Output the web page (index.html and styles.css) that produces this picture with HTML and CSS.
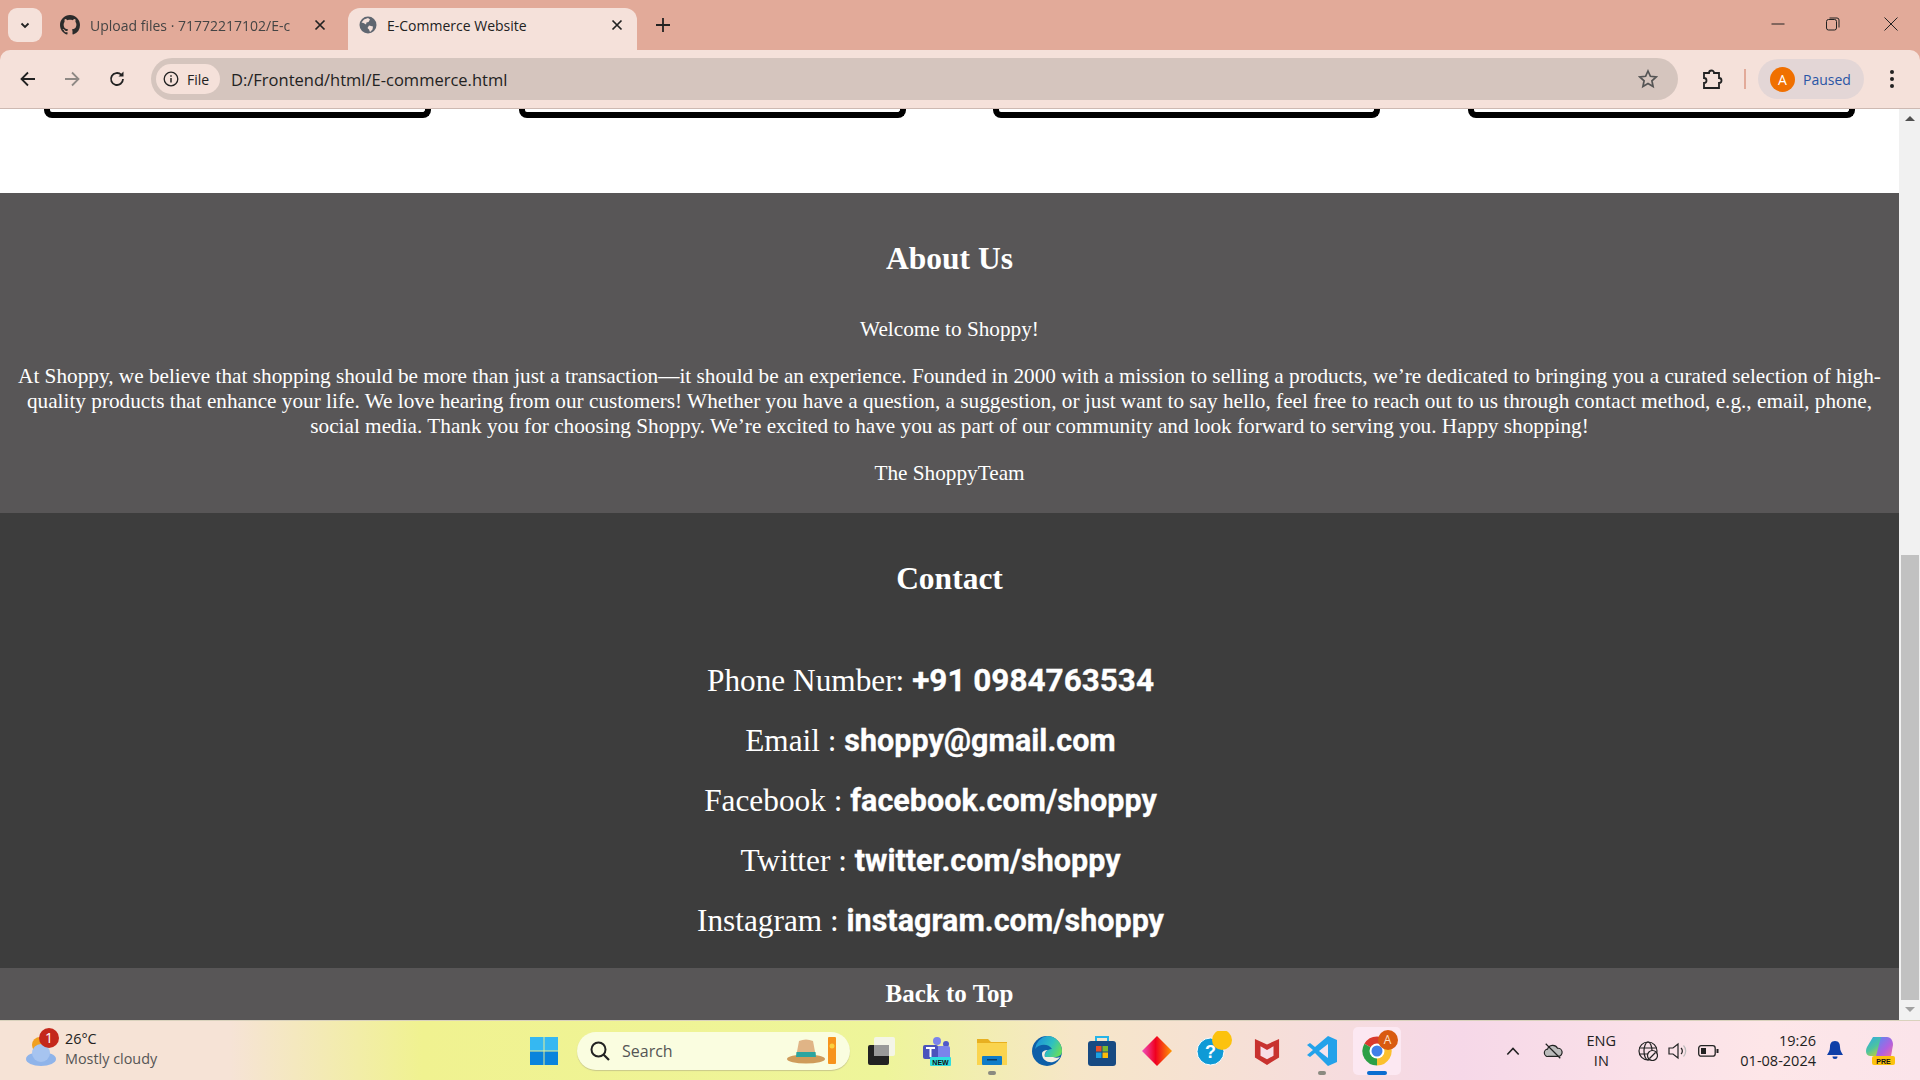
FILE: index.html
```html
<!DOCTYPE html>
<html lang="en">
<head>
    <meta charset="UTF-8">
    <title>E-Commerce Website</title>
    <link rel="stylesheet" href="styles.css">
</head>
<body>
    <div class="tabstrip">
        <div class="tab-search">
            <svg width="12" height="12" viewBox="0 0 12 12"><path d="M2.500 4.500 6 8l3.500-3.500" fill="none" stroke="#222" stroke-width="1.800"/></svg>
        </div>
        <div class="tab">
            <svg class="fav" width="20" height="20" viewBox="0 0 16 16"><path fill="#2b2b2b" d="M8 0C3.580 0 0 3.580 0 8c0 3.540 2.290 6.530 5.470 7.590.4.070.55-.17.55-.38 0-.19-.01-.82-.01-1.490-2.010.37-2.530-.49-2.690-.94-.09-.23-.48-.94-.82-1.130-.28-.15-.68-.52-.01-.53.63-.01 1.080.58 1.230.82.720 1.210 1.870.87 2.330.66.070-.52.280-.87.510-1.070-1.780-.2-3.640-.89-3.640-3.950 0-.87.310-1.590.820-2.150-.08-.2-.36-1.020.080-2.120 0 0 .67-.21 2.200.82.640-.18 1.320-.27 2-.27s1.360.09 2 .27c1.530-1.040 2.200-.82 2.200-.82.440 1.100.160 1.920.080 2.120.510.560.820 1.270.820 2.150 0 3.070-1.870 3.750-3.650 3.950.290.250.540.730.540 1.480 0 1.070-.01 1.930-.01 2.200 0 .210.150.460.550.380A8.010 8.010 0 0 0 16 8c0-4.420-3.580-8-8-8z"/></svg>
            <span class="tab-title faded">Upload files · 71772217102/E-c</span>
            <svg class="tab-close" width="12" height="12" viewBox="0 0 12 12"><path d="M1.500 1.500l9 9m0-9l-9 9" stroke="#222" stroke-width="1.700"/></svg>
        </div>
        <div class="tab active">
            <svg class="fav" width="18" height="18" viewBox="0 0 18 18"><circle cx="9" cy="9" r="8.500" fill="#5f6670"/><path fill="#f5e1da" d="M5 3.500l4-1.500 2 1.500-1.500 2.500-2 .5-.5 2-2.500-1.500-2-.5zM10 9.500l4 1-.5 3-2.500 2.500-1-2.500-1.500-1.500z"/></svg>
            <span class="tab-title">E-Commerce Website</span>
            <svg class="tab-close" width="12" height="12" viewBox="0 0 12 12"><path d="M1.500 1.500l9 9m0-9l-9 9" stroke="#222" stroke-width="1.700"/></svg>
        </div>
        <svg class="new-tab" width="14" height="14" viewBox="0 0 14 14"><path d="M7 0v14M0 7h14" stroke="#222" stroke-width="1.800"/></svg>
        <div class="window-btns">
            <svg width="14" height="14" viewBox="0 0 14 14"><path d="M.5 7h13" stroke="#222" stroke-width="1"/></svg>
            <svg width="14" height="14" viewBox="0 0 14 14"><rect x=".5" y="2.500" width="10" height="10.500" rx="2" fill="none" stroke="#222"/><path d="M3.500 1h7.500a2 2 0 0 1 2 2v7.500" fill="none" stroke="#222"/></svg>
            <svg width="14" height="14" viewBox="0 0 14 14"><path d="M.5.5l13 13m0-13l-13 13" stroke="#222" stroke-width="1"/></svg>
        </div>
    </div>

    <div class="toolbar">
        <svg class="tool-icon" width="18" height="18" viewBox="0 0 18 18"><path d="M16 9H3m6-6.500L2.500 9 9 15.500" fill="none" stroke="#222" stroke-width="1.800"/></svg>
        <svg class="tool-icon" width="18" height="18" viewBox="0 0 18 18"><path d="M2 9h13M9 2.500 15.500 9 9 15.500" fill="none" stroke="#8f8985" stroke-width="1.800"/></svg>
        <svg class="tool-icon" width="18" height="18" viewBox="0 0 18 18"><path d="M15 9a6 6 0 1 1-1.800-4.300" fill="none" stroke="#222" stroke-width="1.800"/><path d="M15.500 1.500v5h-5z" fill="#222"/></svg>
        <div class="omnibox">
            <div class="chip">
                <svg width="16" height="16" viewBox="0 0 16 16"><circle cx="8" cy="8" r="6.800" fill="none" stroke="#222" stroke-width="1.300"/><path d="M8 7v4.500M8 4.300v1.500" stroke="#222" stroke-width="1.500"/></svg>
                <span>File</span>
            </div>
            <span class="url">D:/Frontend/html/E-commerce.html</span>
            <svg class="star" width="20" height="20" viewBox="0 0 20 20"><path d="M10 2l2.400 5.300 5.800.6-4.300 3.900 1.200 5.700-5.100-2.900-5.100 2.900 1.200-5.700L1.800 7.900l5.800-.6z" fill="none" stroke="#555" stroke-width="1.700"/></svg>
        </div>
        <svg class="ext" width="22" height="22" viewBox="0 0 22 22"><path d="M3 5h5a2.500 2.500 0 0 1 5 0h5v5a2.500 2.500 0 0 1 0 5v5H3v-5a2.500 2.500 0 0 0 0-5z" fill="none" stroke="#222" stroke-width="1.800"/></svg>
        <div class="divider"></div>
        <div class="profile">
            <span class="avatar">A</span>
            <span>Paused</span>
        </div>
        <svg class="kebab" width="6" height="20" viewBox="0 0 6 20"><circle cx="3" cy="3" r="2"/><circle cx="3" cy="10" r="2"/><circle cx="3" cy="17" r="2"/></svg>
    </div>

    <div class="viewport">
        <main class="page">
            <div class="products">
                <div class="card-bottom"></div>
                <div class="card-bottom"></div>
                <div class="card-bottom"></div>
                <div class="card-bottom"></div>
            </div>
            <section class="about">
                <h2>About Us</h2>
                <p>Welcome to Shoppy!</p>
                <p>At Shoppy, we believe that shopping should be more than just a transaction—it should be an experience. Founded in 2000 with a mission to selling a products, we’re dedicated to bringing you a curated selection of high-quality products that enhance your life. We love hearing from our customers! Whether you have a question, a suggestion, or just want to say hello, feel free to reach out to us through contact method, e.g., email, phone, social media. Thank you for choosing Shoppy. We’re excited to have you as part of our community and look forward to serving you. Happy shopping!</p>
                <p>The ShoppyTeam</p>
            </section>
            <section class="contact">
                <h2>Contact</h2>
                <h3 class="phone">Phone Number: <b>+91 0984763534</b></h3>
                <h3>Email : <b>shoppy@gmail.com</b></h3>
                <h3>Facebook : <b>facebook.com/shoppy</b></h3>
                <h3>Twitter : <b>twitter.com/shoppy</b></h3>
                <h3>Instagram : <b>instagram.com/shoppy</b></h3>
            </section>
            <div class="back-top">Back to Top</div>
        </main>
        <div class="scrollbar">
            <span class="arrow-up"></span>
            <div class="track"><div class="thumb"></div></div>
            <span class="arrow-down"></span>
        </div>
    </div>

    <div class="taskbar">
        <div class="weather">
            <div class="weather-icon">
                <svg width="34" height="36" viewBox="0 0 34 36"><circle cx="15" cy="12" r="8" fill="#f0a020"/><ellipse cx="16" cy="26" rx="15" ry="7" fill="#8fb4ea"/><circle cx="16" cy="20" r="9" fill="#a6c4f0"/></svg>
                <span class="badge">1</span>
            </div>
            <div class="weather-text">
                <div class="temp">26°C</div>
                <div class="sky">Mostly cloudy</div>
            </div>
        </div>
        <div class="task-center">
            <svg width="28" height="28" viewBox="0 0 30 30"><path fill="#35b8f2" d="M0 0h14.500v14.500H0zM15.500 0H30v14.500H15.500z"/><path fill="#0a84dc" d="M0 15.500h14.500V30H0zM15.500 15.500H30V30H15.500z"/></svg>
            <div class="search">
                <svg width="22" height="22" viewBox="0 0 22 22"><circle cx="9.500" cy="9.500" r="7" fill="none" stroke="#222" stroke-width="2"/><path d="M14.500 14.500 20 20" stroke="#222" stroke-width="2.200"/></svg>
                <span>Search</span>
                <svg class="hat" width="53" height="30" viewBox="0 0 53 30"><ellipse cx="19" cy="23" rx="19" ry="4.500" fill="#cf9b5a"/><path d="M9 21 12 5q7-3 14 0l3 16z" fill="#e0b486"/><path d="M9.500 16h19l.5 5H9z" fill="#2ba5a0"/><rect x="41" y="1" width="8" height="27" rx="1" fill="#f7941d"/><circle cx="45" cy="10" r="2.500" fill="#fcd040"/></svg>
            </div>
            <div class="app"><svg width="30" height="30" viewBox="0 0 30 30"><rect x="7" y="1" width="21" height="19" rx="2" fill="#f4f4f4" opacity=".85"/><rect x="1" y="9" width="21" height="20" rx="2" fill="#222"/><rect x="7" y="9" width="15" height="11" fill="#999"/></svg></div>
            <div class="app"><svg width="30" height="30" viewBox="0 0 30 30"><circle cx="15" cy="5" r="4" fill="#7b83eb"/><circle cx="24" cy="8" r="3" fill="#5059c9"/><rect x="13" y="10" width="15" height="13" rx="2" fill="#7b83eb"/><rect x="1" y="9" width="15" height="14" rx="2" fill="#4b53bc"/><path d="M4 12h9M8.500 12v9" stroke="#fff" stroke-width="2"/><rect x="8" y="21" width="21" height="9" rx="1" fill="#2fdde0"/><text x="18.500" y="28.500" class="new-text">NEW</text></svg></div>
            <div class="app dot"><svg width="30" height="28" viewBox="0 0 30 28"><path d="M0 2h11l3 3h16v23H0z" fill="#e8b020"/><path d="M0 6h30v22H0z" fill="#fad44e"/><rect x="5" y="19" width="20" height="9" rx="1" fill="#0f7cc8"/><rect x="10" y="22" width="10" height="1.500" fill="#0a3c66"/></svg></div>
            <div class="app"><svg width="30" height="30" viewBox="0 0 30 30"><defs><linearGradient id="edge" x1="0" x2="1" y1=".2" y2=".6"><stop offset="0" stop-color="#1a8fdc"/><stop offset=".6" stop-color="#2fc0c0"/><stop offset="1" stop-color="#66dc60"/></linearGradient></defs><circle cx="15" cy="15" r="15" fill="#0d5fa8"/><path d="M15 0a15 15 0 0 1 15 15c0 4-3 6-8 6h-9c-1-4 2-8 7-8-3-5-12-6-17 0A15 15 0 0 1 15 0z" fill="url(#edge)"/><path d="M10 18c0 6 6 9 11 8 3-1 5-2 7-5-2 1-4 1-7 0h-8c-1-2 0-6 3-7-3 0-6 1-6 4z" fill="#f6eee0"/></svg></div>
            <div class="app"><svg width="30" height="30" viewBox="0 0 30 30"><rect x="1" y="5" width="28" height="25" rx="3" fill="#174a82"/><path d="M9 5V1h12v4" fill="none" stroke="#26b4e8" stroke-width="2"/><path fill="#e7502a" d="M9 10h5.500v5.500H9z"/><path fill="#7cb82f" d="M15.500 10H21v5.500h-5.500z"/><path fill="#1ba1e2" d="M9 16.500h5.500V22H9z"/><path fill="#fbbc09" d="M15.500 16.500H21V22h-5.500z"/></svg></div>
            <div class="app"><svg width="30" height="30" viewBox="0 0 30 30"><defs><linearGradient id="red" x1="0" x2="1"><stop offset="0" stop-color="#f050c0"/><stop offset=".45" stop-color="#f00020"/><stop offset="1" stop-color="#ff9a00"/></linearGradient></defs><path d="M15 0l15 15-15 15L0 15z" fill="url(#red)"/></svg></div>
            <div class="app"><svg width="40" height="40" viewBox="0 0 40 40"><circle cx="18.500" cy="20.500" r="13.500" fill="#0f9ad6" stroke="#fff" stroke-width="1"/><text x="18.500" y="27" class="help-text">?</text><circle cx="30" cy="9" r="10" fill="#fcc20e"/></svg></div>
            <div class="app"><svg width="26" height="30" viewBox="0 0 28 30"><path d="M1 2l13 6 13-6v20l-13 8-13-8z" fill="#c8322f"/><path d="M7 10l7 4 7-4v10l-7 4-7-4z" fill="#f8dde6"/></svg></div>
            <div class="app dot"><svg width="30" height="30" viewBox="0 0 30 30"><path d="M21 0 30 4v22l-9 4L8 17l-5 4-3-2 6-5-6-5 3-2 5 4z" fill="#23a2ea"/><path d="M21 8v14l-9-7z" fill="#f4e4ee"/></svg></div>
            <div class="app chrome">
                <svg width="30" height="30" viewBox="0 0 30 30"><path d="M15 15 2.400 7.700a14.500 14.500 0 0 1 25.200 0z" fill="#d93a2e"/><path d="M15 15 2.400 7.700A14.500 14.500 0 0 0 15 29.500z" fill="#2c9f46"/><path d="M15 15 27.600 7.700A14.500 14.500 0 0 1 15 29.500z" fill="#fbc02d"/><circle cx="15" cy="15" r="7.500" fill="#fff"/><circle cx="15" cy="15" r="5.500" fill="#3f7fe8"/></svg>
                <span class="chrome-badge">A</span>
            </div>
        </div>
        <div class="tray">
            <svg width="14" height="10" viewBox="0 0 16 10"><path d="M1.500 9 8 2l6.500 7" fill="none" stroke="#222" stroke-width="1.800"/></svg>
            <svg class="tray-cloud" width="20" height="20" viewBox="0 0 22 20"><path d="M6 16a4 4 0 0 1-1-8 6 6 0 0 1 11-1 4.500 4.500 0 0 1 1 9z" fill="#bbb" stroke="#222" stroke-width="1.300"/><path d="M3 2l16 16" stroke="#222" stroke-width="1.300"/></svg>
            <div class="lang">ENG<br>IN</div>
            <div class="status">
                <svg width="20" height="20" viewBox="0 0 20 20"><circle cx="10" cy="10" r="9" fill="none" stroke="#222" stroke-width="1.200"/><ellipse cx="10" cy="10" rx="4" ry="9" fill="none" stroke="#222" stroke-width="1.200"/><path d="M1 7h18M1 13h18" stroke="#222" stroke-width="1.200"/><circle cx="14.500" cy="14.500" r="5" fill="#fbe6ea" stroke="#222" stroke-width="1.200"/><path d="M11.500 17.500l6-6" stroke="#222" stroke-width="1.200"/></svg>
                <svg width="20" height="20" viewBox="0 0 20 20"><path d="M1 7h4l5-4v14l-5-4H1z" fill="none" stroke="#222" stroke-width="1.200"/><path d="M13 7a4 4 0 0 1 0 6" fill="none" stroke="#222" stroke-width="1.200"/><path d="M15.500 4.500a8 8 0 0 1 0 11" fill="none" stroke="#bbb" stroke-width="1.200"/></svg>
                <svg width="21" height="14" viewBox="0 0 21 14"><rect x=".7" y="1.700" width="16.500" height="10.500" rx="2.500" fill="none" stroke="#222" stroke-width="1.300"/><rect x="3" y="4" width="5" height="6" fill="#222"/><rect x="18.500" y="5" width="2" height="4" fill="#222"/></svg>
            </div>
            <div class="clock">19:26<br>01-08-2024</div>
            <svg width="20" height="22" viewBox="0 0 20 22"><path d="M10 1c-4 0-5 3-5 6 0 4-2 6-3 8h16c-1-2-3-4-3-8 0-3-1-6-5-6z" fill="#0f3fa8"/><path d="M7.500 16.500a2.500 2.500 0 0 0 5 0z" fill="#0f3fa8"/></svg>
            <svg class="copilot" width="29" height="30" viewBox="0 0 29 30"><defs><linearGradient id="copa" x1="0" x2=".6" y1="0" y2="1"><stop offset="0" stop-color="#2ea8e8"/><stop offset=".6" stop-color="#4cc4a0"/><stop offset="1" stop-color="#b8d040"/></linearGradient><linearGradient id="copb" x1="0" x2="1" y1="0" y2="1"><stop offset="0" stop-color="#5090f0"/><stop offset=".6" stop-color="#b060e0"/><stop offset="1" stop-color="#f070a0"/></linearGradient></defs><path d="M7 1h10l-5 19H4C0 20-1 15 1 11z" fill="url(#copa)"/><path d="M15 1h6c4 0 6 4 6 8l-2 11H10z" fill="url(#copb)"/><rect x="6" y="20" width="23" height="9" rx="2" fill="#fcc20e"/><text x="17.500" y="27.500" class="pre-text">PRE</text></svg>
        </div>
    </div>
</body>
</html>
```

FILE: styles.css
```css
* {
    box-sizing: border-box;
}
html, body {
    height: 100%;
}
body {
    margin: 0;
    display: flex;
    flex-direction: column;
    overflow: hidden;
    font-family: "Liberation Serif", serif;
    color: #fff;
    background-color: #e2aa99;
}

/* browser chrome */
.tabstrip {
    height: 50px;
    flex: none;
    display: flex;
    align-items: flex-start;
    padding: 8px 0 0 8px;
    background-color: #e2aa99;
    font-family: "Open Sans", "Liberation Sans", sans-serif;
    color: #222;
}
.tab-search {
    width: 34px;
    height: 34px;
    margin-right: 8px;
    display: flex;
    align-items: center;
    justify-content: center;
    border-radius: 9px;
    background-color: #f5e1da;
}
.tab {
    width: 298px;
    height: 42px;
    display: flex;
    align-items: center;
    padding: 0 22px 8px 10px;
    border-radius: 12px 12px 0 0;
    font-size: 14px;
}
.tab.active {
    width: 289px;
    padding: 0 14px 8px 11px;
    background-color: #f5e1da;
}
.fav {
    flex: none;
    margin-right: 10px;
}
.tab-title {
    flex: 1;
    min-width: 0;
    white-space: nowrap;
}
.tab-title.faded {
    color: #444;
    -webkit-mask-image: linear-gradient(to right, #000 88%, transparent);
    mask-image: linear-gradient(to right, #000 88%, transparent);
}
.tab-close {
    flex: none;
}
.new-tab {
    margin: 10px 0 0 19px;
}
.window-btns {
    margin-left: auto;
    display: flex;
    gap: 41px;
    padding: 9px 22px 0 0;
}
.window-btns svg:last-child {
    margin-left: 3px;
}
.toolbar {
    height: 59px;
    flex: none;
    display: flex;
    align-items: center;
    padding: 0 25px 0 19px;
    background-color: #f5e1da;
    border-bottom: 1px solid #cdb9b2;
    border-radius: 10px 10px 0 0;
    font-family: "Open Sans", "Liberation Sans", sans-serif;
    color: #222;
}
.tool-icon {
    flex: none;
    margin-right: 26px;
}
.tool-icon + .tool-icon {
    margin-right: 27px;
}
.omnibox {
    flex: 1;
    height: 42px;
    display: flex;
    align-items: center;
    margin-left: -2px;
    padding: 0 20px 0 5px;
    border-radius: 21px;
    background-color: #d5c5be;
    font-size: 16.500px;
}
.chip {
    width: 64px;
    height: 30px;
    display: flex;
    align-items: center;
    gap: 8px;
    padding-left: 7px;
    border-radius: 15px;
    background-color: #f5e1da;
    font-size: 14px;
    font-weight: 500;
}
.url {
    flex: 1;
    margin-left: 11px;
}
.ext {
    flex: none;
    margin-left: 23px;
}
.divider {
    width: 2px;
    height: 20px;
    margin-left: 21px;
    background-color: #e2aa99;
}
.profile {
    width: 106px;
    height: 40px;
    display: flex;
    align-items: center;
    gap: 8px;
    margin-left: 12px;
    padding-left: 12px;
    border-radius: 20px;
    background-color: #e3d6d6;
    font-size: 14px;
    color: #2a55a5;
}
.avatar {
    width: 25px;
    height: 25px;
    display: flex;
    align-items: center;
    justify-content: center;
    border-radius: 50%;
    background-color: #f07000;
    color: #fff;
}
.kebab {
    margin-left: 25px;
    fill: #222;
}

/* page */
.viewport {
    flex: 1;
    min-height: 0;
    display: flex;
    background-color: #fff;
}
.page {
    flex: 1;
    min-width: 0;
    display: flex;
    flex-direction: column;
    overflow: hidden;
}
.products {
    height: 84px;
    flex: none;
    display: flex;
    justify-content: space-between;
    padding: 0 44px;
}
.card-bottom {
    width: 387px;
    height: 9px;
    border: 6px solid #000;
    border-top: none;
    border-radius: 0 0 8px 8px;
}
.about {
    height: 320px;
    flex: none;
    padding: 0 8px;
    text-align: center;
    background-color: #585657;
    font-size: 21.250px;
    line-height: 25px;
}
.about h2 {
    margin: 0;
    padding-top: 49px;
    font-size: 31.500px;
    line-height: 34px;
}
.about p {
    margin: 22px 0 0;
}
.about h2 + p {
    margin-top: 41px;
}
.contact {
    height: 455px;
    flex: none;
    text-align: center;
    background-color: #3d3d3d;
}
.contact h2 {
    margin: 0 0 55px;
    padding-top: 49px;
    font-size: 31.500px;
    line-height: 34px;
}
.contact h3 {
    margin: 0;
    height: 60px;
    padding-right: 38px;
    line-height: 60px;
    font-size: 31.300px;
    font-weight: normal;
}
.contact b {
    font-family: Roboto, "Liberation Sans", sans-serif;
    font-size: 30.500px;
    font-weight: bold;
    -webkit-text-stroke: .3px #fff;
}
.contact .phone b {
    font-size: 31.500px;
}
.back-top {
    flex: 1;
    padding-top: 9px;
    text-align: center;
    background-color: #585657;
    font-size: 25px;
    line-height: 34px;
    font-weight: bold;
}
.scrollbar {
    width: 21px;
    flex: none;
    display: flex;
    flex-direction: column;
    align-items: center;
    background-color: #f1f1f1;
}
.arrow-up, .arrow-down {
    width: 0;
    height: 0;
    flex: none;
    margin: 7px 0 8px;
    border-left: 5px solid transparent;
    border-right: 5px solid transparent;
}
.arrow-up {
    border-bottom: 5px solid #505050;
}
.arrow-down {
    border-top: 5px solid #a0a0a0;
}
.track {
    flex: 1;
    width: 100%;
    display: flex;
    flex-direction: column;
    justify-content: flex-end;
}
.thumb {
    height: 445px;
    margin: 0 1px 0 2px;
    background-color: #c1c1c1;
}

/* taskbar */
.taskbar {
    height: 60px;
    flex: none;
    position: relative;
    display: flex;
    align-items: center;
    border-top: 1px solid #d9d2bd;
    background: linear-gradient(to right, #f6e3d6 0, #f6e3d6 12%, #f0f290 22%, #eef59a 46%, #f6e6c8 56%, #f6d8e8 76%, #fde6e8 92%, #fbe4ea 100%);
    font-family: "Open Sans", "Liberation Sans", sans-serif;
    color: #222;
}
.weather {
    display: flex;
    align-items: center;
    gap: 6px;
    padding-left: 25px;
    font-size: 14.400px;
    line-height: 20px;
}
.weather-icon {
    position: relative;
    width: 34px;
    height: 36px;
}
.weather-text {
    padding-bottom: 3px;
}
.badge {
    position: absolute;
    top: -5px;
    right: 0;
    width: 20px;
    height: 20px;
    text-align: center;
    border-radius: 50%;
    background-color: #c4281c;
    color: #fff;
    font-size: 14px;
    line-height: 20px;
}
.sky {
    color: #555;
}
.task-center {
    position: absolute;
    left: 530px;
    top: 0;
    bottom: 0;
    display: flex;
    align-items: center;
}
.search {
    width: 273px;
    height: 38px;
    display: flex;
    align-items: center;
    margin: 0 4px 0 19px;
    padding-left: 12px;
    border-radius: 19px;
    background-color: #fafde0;
    box-shadow: 0 1px 1px #c9c98a;
    font-size: 16px;
    color: #555;
}
.search span {
    flex: 1;
    margin-left: 11px;
}
.hat {
    margin-right: 10px;
}
.app {
    width: 55px;
    height: 48px;
    position: relative;
    display: flex;
    align-items: center;
    justify-content: center;
    border-radius: 5px;
}
.app.dot::after {
    content: "";
    position: absolute;
    bottom: 0;
    left: 24px;
    width: 8px;
    height: 4px;
    border-radius: 2px;
    background-color: #8a8a80;
}
.chrome {
    width: 48px;
    margin-left: 3.500px;
    background-color: #fce8f2;
}
.chrome::after {
    content: "";
    position: absolute;
    bottom: 0;
    left: 14px;
    width: 20px;
    height: 4px;
    border-radius: 2px;
    background-color: #0a6cd0;
}
.chrome-badge {
    position: absolute;
    top: 3px;
    right: 3px;
    width: 20px;
    height: 20px;
    text-align: center;
    border-radius: 50%;
    background-color: #d95a10;
    color: #fde0c8;
    font-size: 12px;
    line-height: 20px;
}
.new-text, .pre-text {
    font-family: "Liberation Sans", sans-serif;
    font-size: 7px;
    font-weight: bold;
    text-anchor: middle;
    fill: #111;
}
.help-text {
    font-family: "Liberation Sans", sans-serif;
    font-size: 18px;
    font-weight: bold;
    text-anchor: middle;
    fill: #fff;
}
.tray {
    margin-left: auto;
    display: flex;
    align-items: center;
    padding-right: 25px;
    font-size: 14.500px;
}
.tray-cloud {
    margin: 0 23px;
}
.lang {
    width: 30px;
    text-align: center;
    line-height: 20px;
}
.status {
    display: flex;
    align-items: center;
    gap: 10px;
    margin: 0 21px 0 22px;
}
.clock {
    margin-right: 9px;
    text-align: right;
    line-height: 20px;
}
.copilot {
    margin-left: 21px;
}
```
